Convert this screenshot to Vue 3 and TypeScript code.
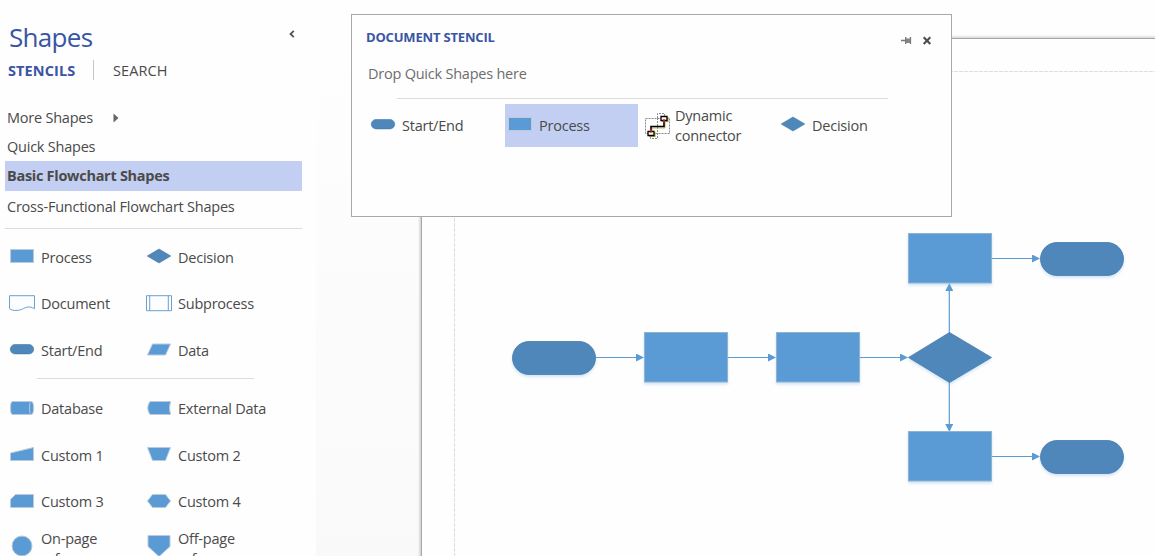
<script setup lang="ts">
interface Shape {
  label: string
  d: string
  kind?: 'dark' | 'outline'
  detail?: string
  tall?: boolean
}

const stencils = [
  { label: 'More Shapes', arrow: true },
  { label: 'Quick Shapes' },
  { label: 'Basic Flowchart Shapes', active: true },
  { label: 'Cross-Functional Flowchart Shapes' },
]

const pill = 'M6 3.5h14a4.7 4.7 0 0 1 0 9.4H6a4.7 4.7 0 0 1 0-9.4z'
const rect = 'M1.5 1.5h23v13h-23z'
const diamond = 'M1.2 8L13 1l11.800 7L13 15z'

const quickShapes: Shape[] = [
  { label: 'Process', d: rect },
  { label: 'Decision', d: diamond, kind: 'dark' },
  {
    label: 'Document',
    d: 'M.5 .7h25v13c-5-3-8.500-1.500-12 .3S4 16.300 .5 13.700z',
    kind: 'outline',
  },
  { label: 'Subprocess', d: 'M.5 .7h25v15H.5z', kind: 'outline', detail: 'M3.700 .7v15M22.300 .7v15' },
  { label: 'Start/End', d: pill, kind: 'dark' },
  { label: 'Data', d: 'M6.500 3h18l-5 11h-18z' },
]

const moreShapes: Shape[] = [
  {
    label: 'Database',
    d: 'M3.500 1.500h19q2 0 2 6.500t-2 6.500h-19q-2 0-2-6.500t2-6.500z',
    detail: 'M22.500 1.500q-2 0-2 6.500t2 6.500',
  },
  { label: 'External Data', d: 'M4 1.500h20.500q-2 6.500 0 13H4q-4.500-6.500 0-13z' },
  { label: 'Custom 1', d: 'M1.500 7L24.500 1.500v13h-23z' },
  { label: 'Custom 2', d: 'M1.500 1.500h23l-5 13h-13z' },
  { label: 'Custom 3', d: 'M6.500 1.500h18v13h-23v-8z' },
  { label: 'Custom 4', d: 'M6.500 1.500h13l5 6.500-5 6.500h-13L1.500 8z' },
  {
    label: 'On-page reference',
    d: 'M13 -2a10 10 0 1 1 0 20a10 10 0 1 1 0-20z',
    tall: true,
  },
  { label: 'Off-page reference', d: 'M2 -2.500h22v11L13 18.500 2 8.500z', tall: true },
]

const processes = [
  { x: 644, y: 332 },
  { x: 776, y: 332 },
  { x: 908, y: 233 },
  { x: 908, y: 431 },
]

const terminators = [
  { x: 512, y: 341 },
  { x: 1040, y: 242 },
  { x: 1040, y: 440 },
]

const connectors = [
  'M596 357.500H636',
  'M728 357.500H768',
  'M860 357.500H900',
  'M992 258.500H1032',
  'M992 456.500H1032',
  'M949.300 333V291',
  'M949.300 382V424',
]
</script>

<template>
  <div class="app">
    <aside class="sidebar">
      <header class="sidebar__header">
        <h1 class="sidebar__title">Shapes</h1>
        <svg class="sidebar__collapse" width="6" height="8" viewBox="0 0 6 8">
          <path d="M4.800 .8L1.500 4l3.300 3.200" />
        </svg>
      </header>

      <nav class="tabs">
        <span class="tabs__item tabs__item--active">STENCILS</span>
        <span class="tabs__item">SEARCH</span>
      </nav>

      <ul class="stencils">
        <li
          v-for="item in stencils"
          :key="item.label"
          class="stencils__item"
          :class="{ 'stencils__item--active': item.active }"
        >
          {{ item.label }}
          <svg v-if="item.arrow" class="stencils__arrow" width="6" height="10" viewBox="0 0 6 10">
            <path d="M.5 .5L5.500 5 .5 9.500z" />
          </svg>
        </li>
      </ul>

      <div class="shapes shapes--quick">
        <div v-for="shape in quickShapes" :key="shape.label" class="shape">
          <svg class="icon" :class="shape.kind && `icon--${shape.kind}`" width="26" height="16" viewBox="0 0 26 16">
            <path :d="shape.d" />
            <path v-if="shape.detail" :d="shape.detail" />
          </svg>
          <span class="shape__label">{{ shape.label }}</span>
        </div>
      </div>
      <div class="shapes shapes--more">
        <div
          v-for="shape in moreShapes"
          :key="shape.label"
          class="shape"
          :class="{ 'shape--tall': shape.tall }"
        >
          <svg class="icon" width="26" height="16" viewBox="0 0 26 16">
            <path :d="shape.d" />
            <path v-if="shape.detail" :d="shape.detail" class="icon__detail" />
          </svg>
          <span class="shape__label">{{ shape.label }}</span>
        </div>
      </div>
    </aside>

    <main class="canvas">
      <svg class="drawing" width="839" height="556" viewBox="316 0 839 556">
        <defs>
          <linearGradient id="page-edge-x">
            <stop offset="0" stop-color="#8c8f8e" stop-opacity="0" />
            <stop offset="1" stop-color="#8c8f8e" stop-opacity=".4" />
          </linearGradient>
          <linearGradient id="page-edge-y" x2="0" y2="1">
            <stop offset="0" stop-color="#8c8f8e" stop-opacity="0" />
            <stop offset="1" stop-color="#8c8f8e" stop-opacity=".35" />
          </linearGradient>
          <marker id="arrow" markerWidth="8" markerHeight="8" refX="0" refY="4" orient="auto" markerUnits="userSpaceOnUse">
            <path d="M0 0L8 4 0 8z" fill="#5b9bd5" />
          </marker>
        </defs>

        <rect x="418" y="38" width="3" height="518" fill="url(#page-edge-x)" />
        <rect x="421" y="35" width="734" height="3" fill="url(#page-edge-y)" />
        <path class="page" d="M421.500 557V38.500H1156V557z" />
        <path class="margin" d="M454.500 557V71.500H1156" />

        <g class="connectors">
          <path v-for="d in connectors" :key="d" :d="d" marker-end="url(#arrow)" />
        </g>
        <g class="nodes">
          <rect v-for="p in processes" :key="`p${p.x}-${p.y}`" class="process" :x="p.x + 0.5" :y="p.y + 0.5" width="83" height="49.500" />
          <rect v-for="t in terminators" :key="`t${t.x}-${t.y}`" class="dark" :x="t.x + 0.5" :y="t.y + 0.5" width="83" height="33" rx="16.500" />
          <path class="dark" d="M908.500 357.500L949.500 332.500 991.500 357.500 949.500 382.500z" />
        </g>
      </svg>
    </main>

    <section class="window">
      <header class="window__header">
        <h2 class="window__title">DOCUMENT STENCIL</h2>
        <svg class="window__buttons" width="32" height="10" viewBox="0 0 32 10">
          <path d="M0 4.500h5M4.700 1v7M9.500 1v7" stroke="#777" stroke-width="1.300" />
          <path d="M5 2.500h4.500v4.500H5z" fill="#858585" />
          <path d="M22.700 1.200l6.600 6.800M29.300 1.200L22.700 8" stroke="#4e4e4e" stroke-width="2.100" />
        </svg>
      </header>
      <p class="window__hint">Drop Quick Shapes here</p>
      <div class="window__shapes">
        <div class="tile">
          <svg class="icon icon--dark" width="26" height="16" viewBox="0 0 26 16"><path :d="pill" /></svg>
          <span class="shape__label">Start/End</span>
        </div>
        <div class="tile tile--selected">
          <svg class="icon" width="26" height="16" viewBox="0 0 26 16"><path :d="rect" /></svg>
          <span class="shape__label">Process</span>
        </div>
        <div class="tile tile--connector">
          <svg width="26" height="26" viewBox="0 0 26 26" fill="none">
            <path d="M.5 5.500h24v15H.5zM12.500 5V.5h7V3M12.500 5v20.500h-7V23" stroke="#8a8a8a" stroke-dasharray="2 1" />
            <path d="M7 18v-3h13V9" stroke="#c9bd4e" />
            <path d="M4 23.500h6V19M17 8.500h6V4" stroke="#b5aa43" stroke-width="1.200" />
            <path d="M6 18.500v-5h13V8" stroke="#000" stroke-width="1.600" />
            <path d="M3 18.500h6v4H3zM16 3.500h6v4h-6z" fill="#fff" stroke="#000" stroke-width="1.300" />
            <path d="M6 16v4M19 6v4M4.700 18h2.600M17.700 8h2.600" stroke="#e02a1d" stroke-width="1.100" />
          </svg>
          <span class="shape__label">Dynamic<br />connector</span>
        </div>
        <div class="tile">
          <svg class="icon icon--dark" width="26" height="16" viewBox="0 0 26 16"><path :d="diamond" /></svg>
          <span class="shape__label">Decision</span>
        </div>
      </div>
    </section>
  </div>
</template>

<style>
body {
  margin: 0;
  background: #fff;
}
</style>

<style scoped>
.app {
  position: relative;
  display: flex;
  width: 1155px;
  height: 556px;
  overflow: hidden;
  background: #fefefe;
  color: #4a4a4a;
  font: 14.5px/20px 'Open Sans', 'Noto Sans', sans-serif;
  letter-spacing: -0.23px;
}

.sidebar {
  box-sizing: border-box;
  width: 316px;
  height: 556px;
  padding: 18px 14px 0 5px;
  flex: none;
  overflow: hidden;
}

.sidebar__header {
  display: flex;
  justify-content: space-between;
  height: 38px;
  padding: 0 7px 0 4px;
}

.sidebar__title {
  margin: 0;
  color: #3955a3;
  font-size: 26px;
  font-weight: 400;
  line-height: 38px;
  letter-spacing: -0.7px;
}

.sidebar__collapse {
  margin-top: 12px;
}

.sidebar__collapse path {
  fill: none;
  stroke: #555;
  stroke-width: 1.8;
}

.tabs {
  display: flex;
  height: 29px;
  padding-left: 3px;
  line-height: 29px;
  letter-spacing: 0.1px;
}

.tabs__item--active {
  width: 85px;
  height: 20px;
  margin: 4px 19px 0 0;
  border-right: 1px solid #c6c6c6;
  color: #3955a3;
  font-weight: 700;
  line-height: 21px;
}

.stencils {
  margin: 18px 0 0;
  padding: 0 0 6px;
  width: 297px;
  border-bottom: 1px solid #dcdcdc;
  list-style: none;
}

.stencils__item {
  display: flex;
  align-items: center;
  height: 30px;
  padding-left: 2px;
}

.stencils__item:first-child,
.stencils__item:nth-child(2) {
  height: 29px;
}

.stencils__item:last-child {
  height: 31px;
}

.stencils__item--active {
  background: #c2cff2;
  font-weight: 700;
  letter-spacing: -0.29px;
  line-height: 22px;
}

.stencils__arrow {
  margin-left: 20px;
  fill: #666;
}

.shapes {
  display: grid;
  grid-template-columns: 137px 137px;
  grid-auto-rows: 46.5px;
  padding-left: 4px;
}

.shapes--quick {
  position: relative;
  padding-top: 5.5px;
  padding-bottom: 5px;
}

.shapes--quick::after {
  content: '';
  position: absolute;
  bottom: 0;
  left: 32px;
  width: 217px;
  height: 1px;
  background: #dcdcdc;
}

.shapes--more {
  padding-top: 7px;
}

.shape {
  display: flex;
  align-items: center;
  gap: 6px;
}

.shape--tall {
  align-items: flex-start;
  padding-top: 3px;
}

.shape--tall .icon {
  margin-top: 9px;
}

.shape--tall .shape__label {
  width: 70px;
}

.icon {
  flex: none;
  margin-top: -3px;
  overflow: visible;
  fill: #5b9bd5;
  stroke: #b9cbdc;
}

.icon--dark {
  fill: #4f87bb;
  stroke: #4378a9;
  stroke-width: 0.6;
}

.icon--outline {
  fill: #fbfdff;
  stroke: #6f9fcf;
}

.icon__detail {
  fill: none;
}

.canvas {
  flex: 1;
  background: linear-gradient(#fefefe 10%, #f9f9f9);
}

.drawing {
  display: block;
}

.page {
  fill: #fefefe;
  stroke: #a7a8a9;
}

.margin {
  fill: none;
  stroke: #dedede;
  stroke-dasharray: 4 1;
}

.connectors {
  fill: none;
  stroke: #5b9bd5;
  stroke-width: 1.2;
}

.nodes {
  filter: drop-shadow(0 2px 1.5px rgb(130 180 235 / 35%));
}

.process {
  fill: #5b9bd5;
  stroke: #8fb3d3;
}

.dark {
  fill: #4f87bb;
  stroke: #457bac;
  stroke-width: 0.8;
}

.window {
  position: absolute;
  top: 14px;
  left: 351px;
  box-sizing: border-box;
  width: 601px;
  height: 203px;
  padding: 12px 14px 0;
  border: 1px solid #a8a8a8;
  background: #fefefe;
}

.window__header {
  display: flex;
  justify-content: space-between;
  height: 20px;
  padding-right: 4px;
}

.window__title {
  margin: 0;
  color: #3955a3;
  font-size: 13px;
  font-weight: 700;
  line-height: 20px;
  letter-spacing: -0.18px;
}

.window__buttons {
  margin-top: 9px;
}

.window__hint {
  width: 491px;
  height: 51px;
  margin: 0 auto 5px 31px;
  border-bottom: 1px solid #dcdcdc;
  color: #6d6d6d;
  line-height: 53px;
  text-indent: -29px;
}

.window__shapes {
  display: grid;
  grid-template-columns: 139px 133px 138px 133px;
  height: 43px;
}

.tile {
  display: flex;
  align-items: center;
  gap: 6px;
  padding-left: 4px;
}

.tile--selected {
  gap: 6px;
  padding-left: 2px;
  background: #c2cff2;
}

.tile--connector {
  gap: 4px;
  padding-left: 7px;
}
</style>
